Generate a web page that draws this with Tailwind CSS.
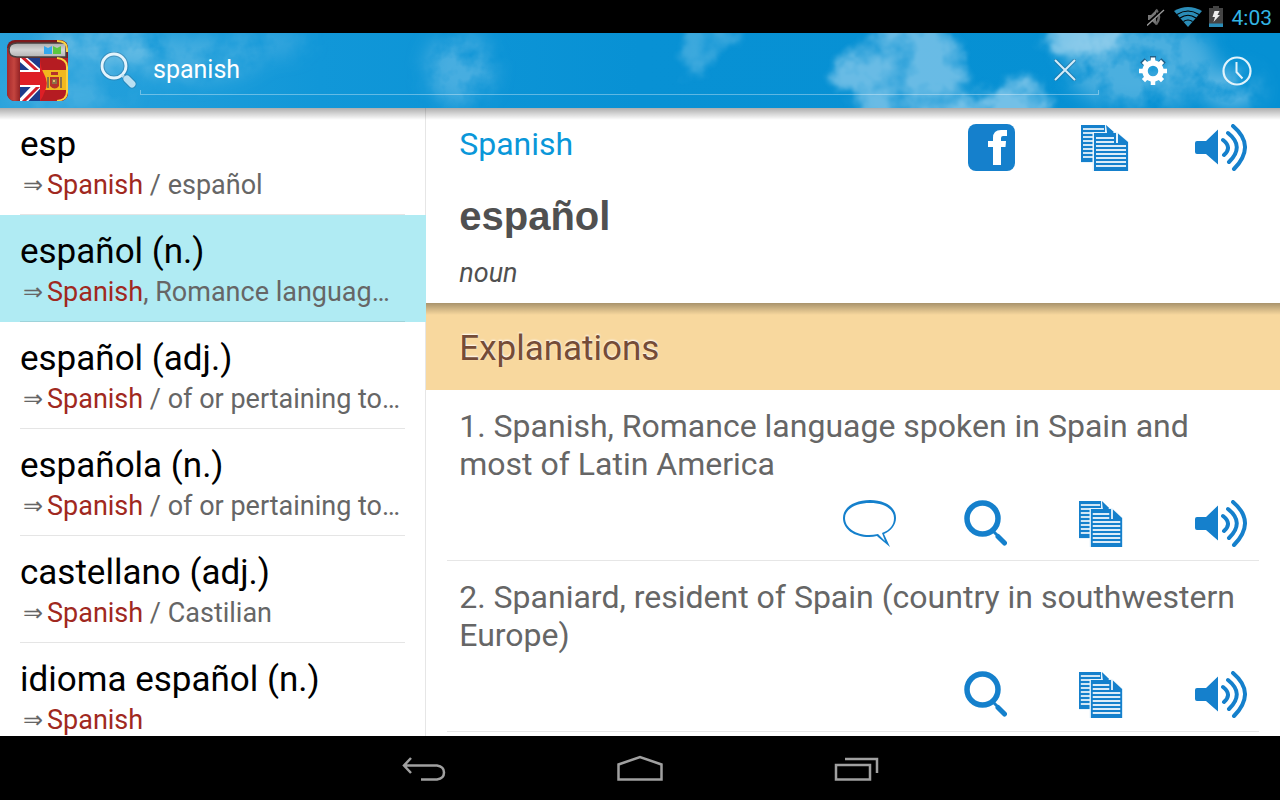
<!DOCTYPE html>
<html lang="en">
<head>
    <meta charset="UTF-8">
    <meta name="viewport" content="width=device-width, initial-scale=1.0">
    <title>Spanish Dictionary</title>
    <script src="https://cdn.jsdelivr.net/npm/@tailwindcss/browser@4"></script>
</head>
<body class="h-screen flex flex-col overflow-hidden bg-white font-['Roboto','DejaVu_Sans',sans-serif]">

    <!-- Shared icons -->
    <svg class="hidden" aria-hidden="true">
        <symbol id="icon-copy" viewBox="0 0 48 47" preserveAspectRatio="none">
            <path fill="#1580cc" d="M0 1h25l9 8v29H0z"/>
            <path stroke="#fff" stroke-width="2" stroke-opacity=".8" d="M2 5h21M2 9h21M2 13h11M2 17h11M2 21h11M2 25h11M2 29h11M2 33h11"/>
            <path fill="#e8f4fc" d="M24 1h1l1 7h-2zM11.500 8H36l12 10v29H11.500zM0 38h12v1H0z"/>
            <path fill="#1580cc" d="M26 3l7 6h-7zM13 9h22v10h12v28H13zM37 9.500L47 18v1H37z"/>
            <path stroke="#fff" stroke-width="2" stroke-opacity=".85" d="M15 14h18M15 18h18M15 22h30M15 26h30M15 30h30M15 34h30M15 38h30M15 42h30"/>
        </symbol>
        <symbol id="icon-speaker" viewBox="0 0 52 47">
            <path fill="#1580cc" d="M0 19q0-2 2-2h9L23 5.500v35L11 30H2q-2 0-2-2z"/>
            <path fill="none" stroke="#1580cc" stroke-width="4" stroke-linecap="round" d="M28 16q9.500 7.500 1 15M33 9q17 13.500 1 29M38 2q23.500 20 1 43"/>
        </symbol>
        <symbol id="icon-find" viewBox="0 0 43 47">
            <circle cx="18.500" cy="18.500" r="15.500" fill="none" stroke="#1580cc" stroke-width="5.500"/>
            <path stroke="#1580cc" stroke-width="3" d="M29 31l5 5"/>
            <path stroke="#1580cc" stroke-width="5" stroke-linecap="round" d="M34 36.500l6.500 6.500"/>
        </symbol>
    </svg>

    <!-- Status bar -->
    <div class="h-[33px] shrink-0 bg-black flex items-center justify-end gap-[7px] pr-2">
        <svg class="w-[18px] h-[20px] mr-[2px]" viewBox="0 0 18 20">
            <path fill="#777" d="M1 8h3l5-5v15l-5-5H1z"/>
            <path fill="none" stroke="#666" stroke-width="2.500" d="M9 2.500q6 7.500 0 15"/>
            <path stroke="#000" stroke-width="3" d="M1 16L18 1"/>
            <path stroke="#999" stroke-width="1.300" d="M0 18.500L17 3"/>
        </svg>
        <svg class="w-[28px] h-[20px]" viewBox="0 0 28 20">
            <path fill="#2b8db8" d="M14 20L0 4Q14-4 28 4z"/>
            <path fill="none" stroke="#000" stroke-width="1.200" d="M3 7.500q11-7 22 0M6 11q8-5.500 16 0M9.500 14.500q4.500-3 9 0"/>
        </svg>
        <svg class="w-[14px] h-[21px]" viewBox="0 0 14 21">
            <path fill="#444" d="M0 2h4V0h6v2h4v16H0z"/>
            <path fill="#2b8db8" d="M0 17.500h14V21H0z"/>
            <path fill="#eee" d="M5.500 5h5L8.500 9H11l-6.500 7 1.500-5H3.500z"/>
        </svg>
        <time class="pl-[2px] pt-[2px] text-[21px] leading-6 text-[#33b5e5]">4:03</time>
    </div>

    <!-- Search bar -->
    <header class="relative z-10 h-[75px] shrink-0 flex items-center bg-[#0a93d4] pl-[7px] pr-px">
        <svg class="absolute inset-0 w-full h-full" viewBox="0 0 1280 75" preserveAspectRatio="none" aria-hidden="true">
            <defs>
                <linearGradient id="sky">
                    <stop offset="0" stop-color="#2ba3dc"/>
                    <stop offset=".25" stop-color="#1197d8"/>
                    <stop offset=".5" stop-color="#0891d4"/>
                    <stop offset="1" stop-color="#0590d3"/>
                </linearGradient>
                <filter id="haze" x="-30%" y="-60%" width="160%" height="220%">
                    <feTurbulence type="fractalNoise" baseFrequency=".03" numOctaves="4" seed="9" result="noise"/>
                    <feColorMatrix in="noise" values="0 0 0 0 1  0 0 0 0 1  0 0 0 0 1  2.500 0 0 0 -.5" result="mask"/>
                    <feGaussianBlur in="SourceGraphic" stdDeviation="10" result="soft"/>
                    <feComposite in="soft" in2="mask" operator="in"/>
                </filter>
                <filter id="cloud" x="-20%" y="-40%" width="140%" height="180%">
                    <feTurbulence type="fractalNoise" baseFrequency=".035" numOctaves="5" seed="4" result="noise"/>
                    <feColorMatrix in="noise" values="0 0 0 0 1  0 0 0 0 1  0 0 0 0 1  0 0 1.500 0 .15" result="mask"/>
                    <feGaussianBlur in="SourceGraphic" stdDeviation="5" result="soft"/>
                    <feDisplacementMap in="soft" in2="noise" scale="34" xChannelSelector="R" yChannelSelector="G" result="torn"/>
                    <feComposite in="torn" in2="mask" operator="in"/>
                    <feGaussianBlur stdDeviation="1"/>
                </filter>
            </defs>
            <path fill="url(#sky)" d="M0 0h1280v75H0z"/>
            <g fill="#8fcdec" filter="url(#haze)">
                <ellipse cx="100" cy="12" rx="60" ry="22" fill-opacity=".5"/>
                <ellipse cx="190" cy="25" rx="70" ry="22" fill-opacity=".35"/>
                <ellipse cx="70" cy="62" rx="60" ry="18" fill-opacity=".3"/>
                <ellipse cx="270" cy="10" rx="40" ry="14" fill-opacity=".25"/>
                <ellipse cx="460" cy="36" rx="34" ry="36" fill-opacity=".45"/>
                <ellipse cx="1140" cy="30" rx="75" ry="46" fill-opacity=".5"/>
                <ellipse cx="1232" cy="56" rx="28" ry="18" fill-opacity=".7"/>
            </g>
            <g fill="#9dd3ee" filter="url(#cloud)">
                <path fill-opacity=".35" d="M684-5h60l-14 16-14 6-6 18-14 10-12-10z"/>
                <path fill-opacity=".65" d="M880-12h58l16 34 14 24-14 18-4 24h-86l0-20-22-12-8-16 12-14 28-12z"/>
                <path fill-opacity=".72" d="M944 84l14-20 32-4 16-10 24 0 16 16 2 24h-102z"/>
                <path fill-opacity=".8" d="M1046-12h84l-6 28-18 8-30 0-20-6-10-8z"/>
            </g>
        </svg>

        <svg class="relative w-[62px] h-[62px]" viewBox="0 0 62 62" role="img" aria-label="Dictionary">
            <defs>
                <clipPath id="book"><rect width="61" height="61" rx="8"/></clipPath>
                <clipPath id="jack"><path d="M13 18h20v44H13z"/></clipPath>
                <linearGradient id="spine"><stop offset="0" stop-color="#a5282b"/><stop offset=".5" stop-color="#c4453f"/><stop offset="1" stop-color="#8c1c20"/></linearGradient>
                <linearGradient id="pages" x2="0" y2="1"><stop offset="0" stop-color="#aaa"/><stop offset=".5" stop-color="#d4d4d4"/><stop offset="1" stop-color="#b4b4b4"/></linearGradient>
            </defs>
            <g clip-path="url(#book)">
                <path fill="#7d1a1c" d="M0 0h62v62H0z"/>
                <path fill="url(#spine)" d="M0 8h14v54H0z"/>
                <path fill="#b51c22" d="M32 18h30v44H32z"/>
                <path fill="#f2b81e" d="M32 30h30v20H32z"/>
                <g clip-path="url(#jack)">
                    <path fill="#1d3c8c" d="M13 18h20v44H13z"/>
                    <path stroke="#fff" stroke-width="8" d="M11 15l23 20M11 66l23-24"/>
                    <path stroke="#d21f2a" stroke-width="3" d="M13 15l22 20M11 67l23-23"/>
                    <path fill="#fff" d="M13 30h20v17H13z"/>
                </g>
                <path fill="#de1f26" d="M13 32h20V20q1 9 4 14 5 9 1 17-2 6-5 10V45H13z"/>
                <path fill="#b5322b" d="M43 37h9v9q-4 5-9 0zM44 32h7v3h-7z"/>
                <path fill="#8d7147" d="M40 37h2v11h-2zM53 37h2v11h-2zM45 39h5v5h-5z"/>
                <path fill="#e7b96c" d="M46 40h2v2h-2z"/>
                <path fill="url(#pages)" stroke="#4a4040" stroke-width="1.500" d="M59 3H10Q2 3 2 10q0 7 8 7h49z"/>
                <path fill="#35a7ee" d="M37 6l4 2 4-2v8h-8z"/>
                <path fill="#5cc83f" d="M46 6l4 2 4-2v8h-8z"/>
                <path fill="none" stroke="#fbd13f" stroke-width="2" d="M50 1q10 0 10 8v3M50 18q10 1 10 9v25q0 8-10 9"/>
            </g>
        </svg>

        <button type="button" aria-label="Search" class="relative ml-[31px] w-10 cursor-pointer">
            <svg class="w-[37px] h-[38px]" viewBox="0 0 37 38">
                <circle cx="14" cy="14" r="12" fill="#fff" fill-opacity=".12" stroke="#28648c" stroke-opacity=".4" stroke-width="5"/>
                <circle cx="14" cy="14" r="12" fill="none" stroke="#e4f4fc" stroke-width="2.800"/>
                <path stroke="#b9e0f3" stroke-width="3" d="M22 23l4 4"/>
                <path stroke="#28648c" stroke-opacity=".4" stroke-width="9" stroke-linecap="round" d="M27 27l5 5"/>
                <path stroke="#b9e0f3" stroke-width="7" stroke-linecap="round" d="M27 27l5 5"/>
            </svg>
        </button>

        <div class="relative flex-1 h-[62px] flex items-start">
            <input type="text" value="spanish" aria-label="Search word" class="flex-1 min-w-0 h-[60px] pl-[13px] text-[25px] text-white bg-transparent outline-none">
            <button type="button" aria-label="Clear" class="h-[60px] mr-[23px] cursor-pointer">
                <svg class="w-[22px] h-[22px]" viewBox="0 0 22 22">
                    <path stroke="#28648c" stroke-opacity=".45" stroke-width="4" stroke-linecap="round" d="M1.500 1.500l19 19M20.500 1.500l-19 19"/>
                    <path stroke="#d4ecf8" stroke-width="2" stroke-linecap="round" d="M1.500 1.500l19 19M20.500 1.500l-19 19"/>
                </svg>
            </button>
            <span class="absolute inset-x-0 bottom-[7px] h-[5px] border border-t-0 border-white/35 pointer-events-none"></span>
        </div>

        <button type="button" aria-label="Settings" class="relative ml-3 w-[84px] h-full flex items-center justify-center cursor-pointer">
            <svg class="w-[30px] h-[30px]" viewBox="-15 -15 30 30">
                <g fill="#235f86">
                    <path d="M-3-15.500h6v4h-6z"/><path transform="rotate(45)" d="M-3-15h6v4h-6z"/><path transform="rotate(-45)" d="M-3-15h6v4h-6z"/>
                </g>
                <circle r="8" fill="none" stroke="#fff" stroke-width="5.500"/>
                <g stroke="#fff" stroke-width="4.500">
                    <path d="M0-13.500v5M0 14v-5M-14 0h5M14 0h-5"/>
                    <path transform="rotate(45)" d="M0-13.500v5M0 13.500v-5M-13.500 0h5M13.500 0h-5"/>
                </g>
            </svg>
        </button>
        <button type="button" aria-label="History" class="relative w-[84px] h-full flex items-center justify-center cursor-pointer">
            <svg class="w-[30px] h-[30px]" viewBox="0 0 30 30">
                <circle cx="15" cy="15" r="13.500" fill="none" stroke="#e2f3fb" stroke-width="2.200"/>
                <path fill="none" stroke="#e2f3fb" stroke-width="2" d="M14.500 6v10l6 6.500"/>
            </svg>
        </button>

        <span class="absolute inset-x-0 top-full h-3 bg-linear-to-b from-black/32 to-transparent pointer-events-none"></span>
    </header>

    <main class="flex-1 min-h-0 flex overflow-hidden">
        <!-- Results -->
        <ul class="w-[33.3%] shrink-0 border-r border-[#e6e6e6] whitespace-nowrap text-[#666]">
            <li><a href="#" class="block px-5 pt-4">
                <h2 class="text-[35px] leading-[42px] text-black">esp</h2>
                <p class="flex pb-[10px] border-b border-black/10 text-[27px] leading-[38px]"><span class="w-[27px] pl-[3px] text-2xl leading-[38px]">⇒</span><span class="flex-1 truncate"><span class="text-[#a02820]">Spanish</span> / español</span></p>
            </a></li>
            <li><a href="#" class="block -mr-px pl-5 pr-[21px] pt-4 bg-[#b0ebf3]" aria-current="true">
                <h2 class="text-[35px] leading-[42px] text-black">español (n.)</h2>
                <p class="flex pb-[10px] border-b border-black/10 text-[27px] leading-[38px]"><span class="w-[27px] pl-[3px] text-2xl leading-[38px]">⇒</span><span class="flex-1 truncate"><span class="text-[#a02820]">Spanish</span>, Romance languag…</span></p>
            </a></li>
            <li><a href="#" class="block px-5 pt-4">
                <h2 class="text-[35px] leading-[42px] text-black">español (adj.)</h2>
                <p class="flex pb-[10px] border-b border-black/10 text-[27px] leading-[38px]"><span class="w-[27px] pl-[3px] text-2xl leading-[38px]">⇒</span><span class="flex-1 truncate"><span class="text-[#a02820]">Spanish</span> / of or pertaining to…</span></p>
            </a></li>
            <li><a href="#" class="block px-5 pt-4">
                <h2 class="text-[35px] leading-[42px] text-black">española (n.)</h2>
                <p class="flex pb-[10px] border-b border-black/10 text-[27px] leading-[38px]"><span class="w-[27px] pl-[3px] text-2xl leading-[38px]">⇒</span><span class="flex-1 truncate"><span class="text-[#a02820]">Spanish</span> / of or pertaining to…</span></p>
            </a></li>
            <li><a href="#" class="block px-5 pt-4">
                <h2 class="text-[35px] leading-[42px] text-black">castellano (adj.)</h2>
                <p class="flex pb-[10px] border-b border-black/10 text-[27px] leading-[38px]"><span class="w-[27px] pl-[3px] text-2xl leading-[38px]">⇒</span><span class="flex-1 truncate"><span class="text-[#a02820]">Spanish</span> / Castilian</span></p>
            </a></li>
            <li><a href="#" class="block px-5 pt-4">
                <h2 class="text-[35px] leading-[42px] text-black">idioma español (n.)</h2>
                <p class="flex pb-[10px] border-b border-black/10 text-[27px] leading-[38px]"><span class="w-[27px] pl-[3px] text-2xl leading-[38px]">⇒</span><span class="flex-1 truncate"><span class="text-[#a02820]">Spanish</span></span></p>
            </a></li>
        </ul>

        <!-- Word details -->
        <article class="flex-1 min-w-0">
            <div class="px-[33px] pt-4 pb-3">
                <div class="flex items-start justify-between">
                    <p class="text-[32px] leading-10 text-[#0a97d9]">Spanish</p>
                    <div class="flex gap-[66px]">
                        <button type="button" aria-label="Share on Facebook" class="cursor-pointer">
                            <svg class="w-[47px] h-[47px]" viewBox="0 0 47 47">
                                <rect width="47" height="47" rx="8" fill="#1580cc"/>
                                <path fill="#fff" d="M25 41V23h-5v-6h5v-3q0-8 8-8h6v6h-4q-2 0-2 2v3h5l-.500 6H33v18z"/>
                            </svg>
                        </button>
                        <button type="button" aria-label="Copy" class="cursor-pointer"><svg class="w-12 h-[47px]"><use href="#icon-copy"/></svg></button>
                        <button type="button" aria-label="Listen" class="cursor-pointer"><svg class="w-[52px] h-[47px]"><use href="#icon-speaker"/></svg></button>
                    </div>
                </div>
                <h1 class="mt-[21px] font-['Liberation_Sans',sans-serif] font-bold text-[40px] leading-[48px] text-[#505050]">español</h1>
                <p class="mt-[15px] italic text-[27px] leading-9 text-[#505050]">noun</p>
            </div>

            <div class="relative px-[33px] pt-[5px] bg-[#f8d89e]">
                <span class="absolute inset-x-0 top-0 h-3 bg-linear-to-b from-black/32 to-transparent"></span>
                <h2 class="text-[35px] leading-[82px] text-[#754c37] text-shadow-[0_-1px_2px_#fff]">Explanations</h2>
            </div>

            <ol class="px-[21px] text-[32px] leading-[38px] text-[#666]">
                <li class="border-b border-[#e6e6e6] px-3 pt-[17px] pb-[13px]">
                    <p>1. Spanish, Romance language spoken in Spain and most of Latin America</p>
                    <div class="mt-[17px] flex justify-end gap-[68px]">
                        <button type="button" aria-label="Comment" class="cursor-pointer">
                            <svg class="w-[53px] h-[47px]" viewBox="0 0 53 47">
                                <path fill="#1580cc" fill-rule="evenodd" d="M27 0C42 0 53 7 53 18c0 7-5 13-12 16l6 13-12-10-1-1q-4 1-8 1C11 37 0 29 0 18 0 7 12 0 27 0zM27 3C13 3 2 9 2 18c0 10 11 17 24 17q4 0 9-1l2 2 5 5-3-8c8-3 12-8 12-15C51 9 41 3 27 3z"/>
                            </svg>
                        </button>
                        <button type="button" aria-label="Look up" class="w-[47px] cursor-pointer"><svg class="w-[43px] h-[47px]"><use href="#icon-find"/></svg></button>
                        <button type="button" aria-label="Copy" class="w-12 cursor-pointer"><svg class="w-11 h-[47px]"><use href="#icon-copy"/></svg></button>
                        <button type="button" aria-label="Listen" class="cursor-pointer"><svg class="w-[52px] h-[47px]"><use href="#icon-speaker"/></svg></button>
                    </div>
                </li>
                <li class="border-b border-[#e6e6e6] px-3 pt-[17px] pb-[13px]">
                    <p>2. Spaniard, resident of Spain (country in southwestern Europe)</p>
                    <div class="mt-[17px] flex justify-end gap-[68px]">
                        <button type="button" aria-label="Look up" class="w-[47px] cursor-pointer"><svg class="w-[43px] h-[47px]"><use href="#icon-find"/></svg></button>
                        <button type="button" aria-label="Copy" class="w-12 cursor-pointer"><svg class="w-11 h-[47px]"><use href="#icon-copy"/></svg></button>
                        <button type="button" aria-label="Listen" class="cursor-pointer"><svg class="w-[52px] h-[47px]"><use href="#icon-speaker"/></svg></button>
                    </div>
                </li>
            </ol>
        </article>
    </main>

    <!-- System navigation -->
    <nav class="relative z-10 h-16 shrink-0 bg-black flex justify-center pt-[2px]">
        <button type="button" aria-label="Back" class="w-[216px] flex items-center justify-center cursor-pointer">
            <svg class="w-[44px] h-[30px]" viewBox="0 0 44 30" fill="none" stroke="#a0a0a0" stroke-width="2.500">
                <path d="M9 4L2 11.500 9 19M2 11.500h33q7 1 7 7 0 6-7 7H19"/>
            </svg>
        </button>
        <button type="button" aria-label="Home" class="w-[216px] flex items-center justify-center cursor-pointer">
            <svg class="w-[48px] h-[30px]" viewBox="0 0 48 30" fill="none" stroke="#a0a0a0" stroke-width="2.500">
                <path d="M2.500 25.500v-15L24 3l21.500 7.500v15z"/>
            </svg>
        </button>
        <button type="button" aria-label="Recent apps" class="w-[216px] flex items-center justify-center cursor-pointer">
            <svg class="w-[46px] h-[30px]" viewBox="0 0 46 30" fill="none" stroke="#a0a0a0" stroke-width="2.500">
                <path d="M3 11h34v14.500H3zM12 5h32v14"/>
            </svg>
        </button>
    </nav>
</body>
</html>
